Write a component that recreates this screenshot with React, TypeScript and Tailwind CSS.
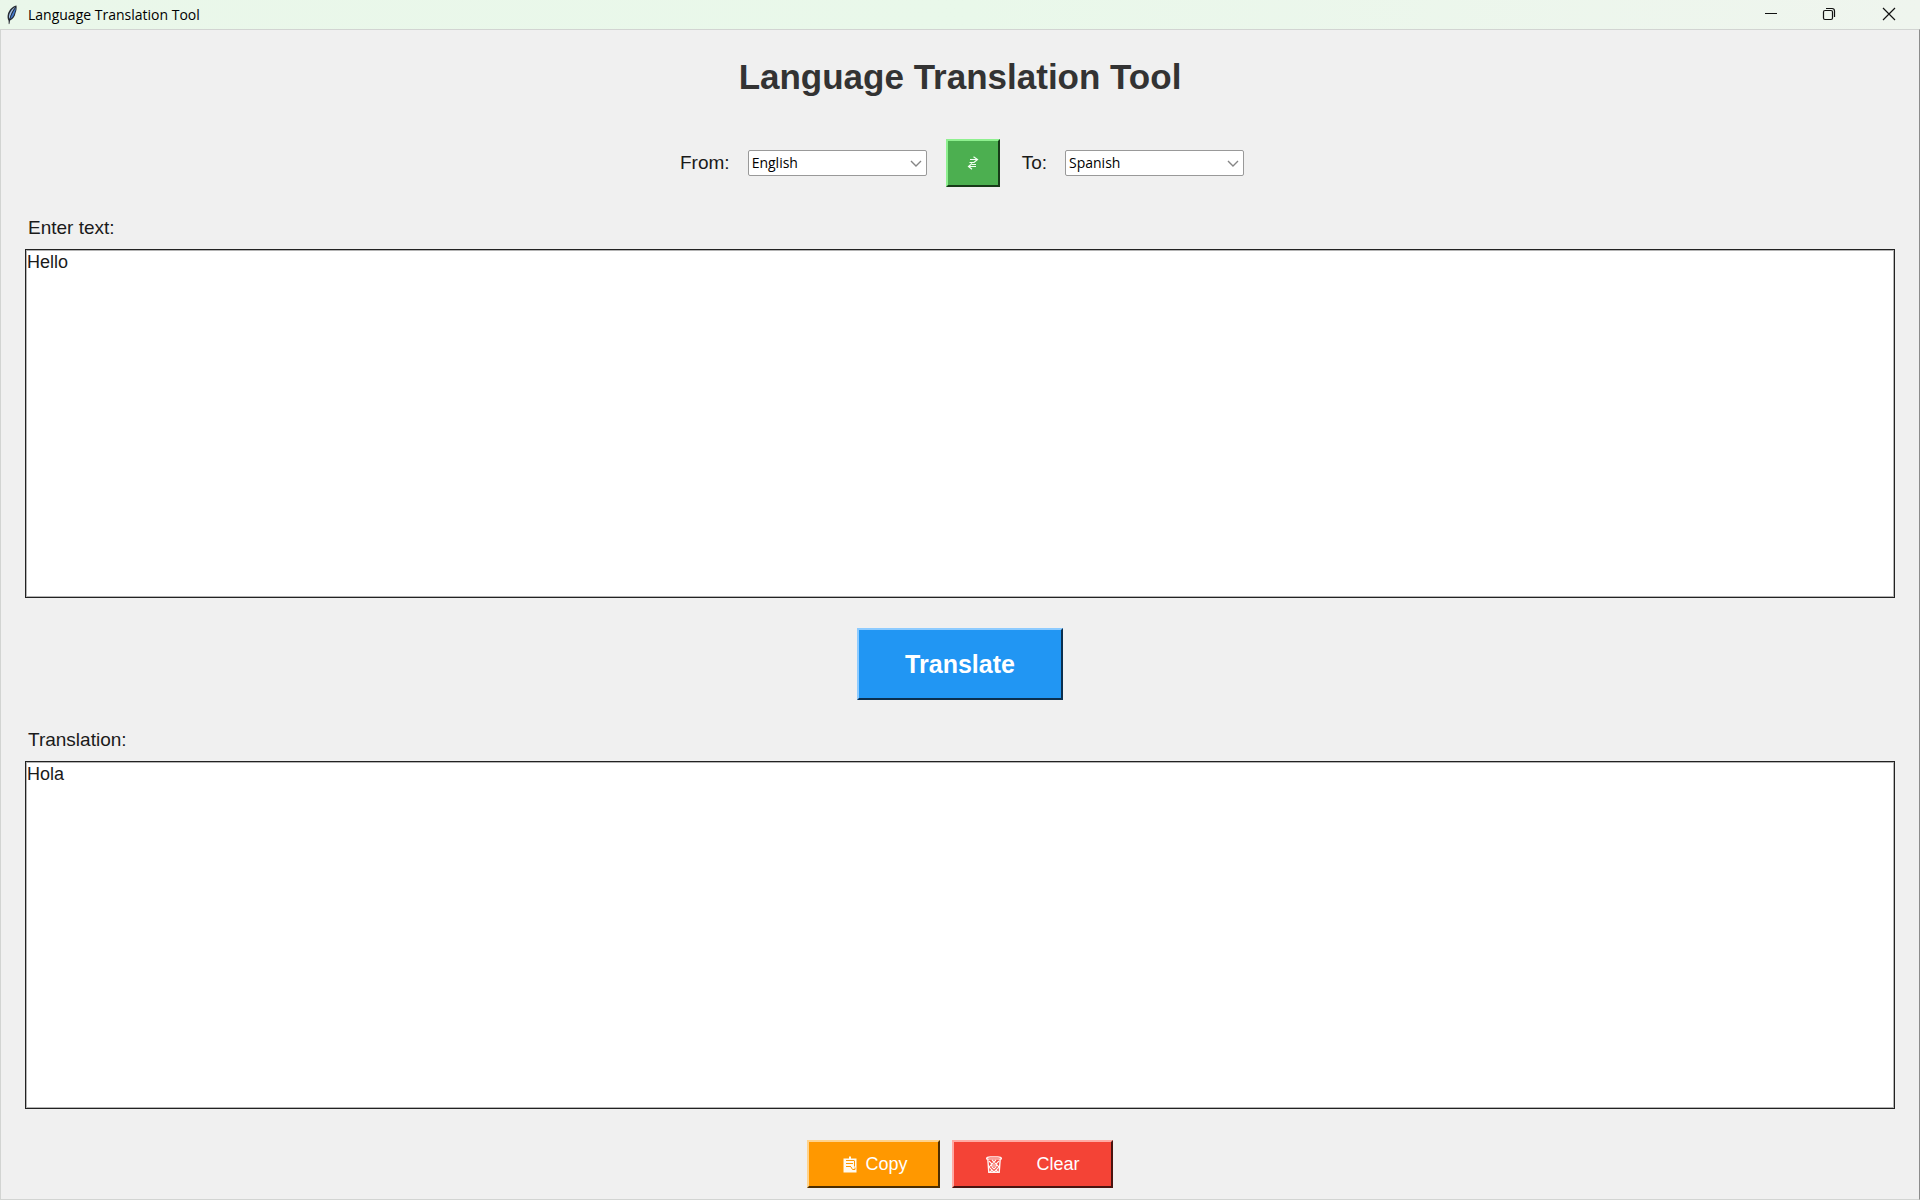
import { useState } from "react";

const LANGUAGES = ["English", "Spanish", "French", "German", "Italian"];

function FeatherIcon() {
  return (
    <svg width="12" height="20" viewBox="0 0 12 20" aria-hidden="true">
      <path d="M10.5.5C7.5 1 3.5 4 2 8.500 1.200 11.500 1.500 14 2.500 15.500L3 19.500l1-4C7 14 9 11.500 9.500 8 10.500 6 10.800 3 10.500.5Z" fill="#252a33" />
      <path d="M9.500 2C7 3 4 6.500 3.200 10c-.4 1.700-.2 3.200.2 4C4.500 10 6.500 5.500 9.500 2Z" fill="#a5c4ec" />
      <path d="M9.800 2.500C7 6.500 5 10.500 4 14.200 6.500 13 8 10.500 8.500 8c.9-1.700 1.300-3.600 1.300-5.500Z" fill="#4379c8" />
      <path d="M9.800 2C6.500 6 4.200 11 3 19" fill="none" stroke="#1a1f28" strokeWidth=".5" />
    </svg>
  );
}

function LanguageSelect({ id, value, onChange }: { id: string; value: string; onChange: (v: string) => void }) {
  return (
    <div className="relative flex w-[179px]">
      <select
        id={id}
        value={value}
        onChange={(e) => onChange(e.target.value)}
        className="h-[26px] w-full appearance-none rounded-[2px] border border-[#999999] bg-white pl-[3px] pr-6 font-['Open_Sans',sans-serif] text-[14px] leading-5 text-black outline-none"
      >
        {LANGUAGES.map((l) => (
          <option key={l}>{l}</option>
        ))}
      </select>
      <svg className="pointer-events-none absolute right-[5px] top-[10px]" width="12" height="8" viewBox="0 0 12 8" fill="none" stroke="#858585" strokeWidth="1.400" aria-hidden="true">
        <path d="M1 1l5 5 5-5" />
      </svg>
    </div>
  );
}

function SwapIcon() {
  return (
    <svg width="12" height="14" viewBox="0 0 12 14" fill="none" stroke="#f2fff2" strokeWidth="1.200" aria-hidden="true">
      <path d="M3 3.500h7.500M6.500.8l4 2.700L7 6.500H2.500M9 10.500H1.500M5 7.500l-3.500 3L5 13.200M5 8.500h4" />
    </svg>
  );
}

function ClipboardIcon() {
  return (
    <svg width="14" height="17" viewBox="0 0 14 17" aria-hidden="true">
      <path d="M.5 2.500H6V.5h2v2h5.500v14H.5Z" fill="#fffaf0" />
      <path d="M3 4.500h8M3 7.500h7M3 10.500h5" stroke="#ff9800" strokeWidth="1.200" />
      <path d="M11.500 4.500v6M8 11l1.500 2.500h2.500v-2" fill="none" stroke="#ff9800" />
    </svg>
  );
}

function TrashIcon() {
  return (
    <svg width="16" height="17" viewBox="0 0 16 17" fill="none" stroke="#fff5f4" aria-hidden="true">
      <path d="M.5 3C.5 1.200 2 .8 4 .8h8c2 0 3.500.4 3.500 2.200Z" strokeWidth="1.200" />
      <path d="M1.800 3l1 13.200h10.400l1-13.200" strokeWidth="1.400" />
      <path d="M3 5l3 3-3 3 3 3-2 2M13 5l-3 3 3 3-3 3 2 2M6 4l2 2 2-2M6 8l2-2 2 2v3l-2 2-2-2ZM6 14l2 2 2-2M8 8v3" strokeWidth="1.100" />
    </svg>
  );
}

export default function App() {
  const [from, setFrom] = useState("English");
  const [to, setTo] = useState("Spanish");
  const [input, setInput] = useState("Hello");
  const [output, setOutput] = useState("Hola");

  const swap = () => {
    setFrom(to);
    setTo(from);
  };

  return (
    <div className="flex min-h-screen flex-col bg-[#f0f0f0] font-['Liberation_Sans',Arial,sans-serif] text-[#1a1a1a]">
      <header className="flex h-[29px] items-center bg-linear-to-r from-[#eaf7ea] via-[#e9f8ea] to-[#eff5ee] text-black">
        <div className="flex flex-1 items-center gap-2.5 pl-1.5">
          <FeatherIcon />
          <span className="font-['Open_Sans',sans-serif] text-[14px] leading-5">Language Translation Tool</span>
        </div>
        <div className="flex pb-px">
          <button aria-label="Minimize" className="flex h-7 w-[58px] items-center justify-center">
            <svg width="14" height="14" viewBox="0 0 14 14" stroke="#111" strokeWidth="1"><path d="M1 6.500h12" /></svg>
          </button>
          <button aria-label="Restore" className="flex h-7 w-[58px] items-center justify-center">
            <svg width="14" height="14" viewBox="0 0 14 14" fill="none" stroke="#111" strokeWidth="1.200">
              <rect x="1.500" y="3.500" width="9" height="9" rx="1.500" />
              <path d="M4 1.500h6a2.500 2.500 0 0 1 2.500 2.500v6" />
            </svg>
          </button>
          <button aria-label="Close" className="flex h-7 w-[62px] items-center justify-center">
            <svg width="14" height="14" viewBox="0 0 14 14" stroke="#111" strokeWidth="1.200"><path d="M1 1l12 12M13 1L1 13" /></svg>
          </button>
        </div>
      </header>

      <main className="flex flex-1 flex-col border border-[#d2d4d2] border-r-[#8c8c8c] px-6 pb-[11px]">
        <h1 className="mt-[27px] text-center text-[35px] leading-10 font-bold text-[#333333]">Language Translation Tool</h1>

        <div className="mt-[42px] flex items-center justify-center pl-1">
          <label htmlFor="from" className="mr-[18px] text-[19px] leading-6">From:</label>
          <LanguageSelect id="from" value={from} onChange={setFrom} />
          <button
            aria-label="Swap languages"
            onClick={swap}
            className="ml-[19px] mr-[22px] flex h-12 w-[54px] items-center justify-center border-2 border-t-[#8ef08f] border-l-[#8ef08f] border-r-[#173a18] border-b-[#173a18] bg-[#4caf50]"
          >
            <SwapIcon />
          </button>
          <label htmlFor="to" className="mr-[18px] text-[19px] leading-6">To:</label>
          <LanguageSelect id="to" value={to} onChange={setTo} />
        </div>

        <label htmlFor="source" className="mt-[29px] ml-[3px] self-start text-[19px] leading-6">Enter text:</label>
        <textarea
          id="source"
          value={input}
          onChange={(e) => setInput(e.target.value)}
          className="mt-[9px] min-h-24 flex-1 resize-none border border-[#222222] bg-white px-px py-px text-[18px] leading-[22px] inset-ring inset-ring-[#b4b4b4] outline-none"
        />

        <button
          onClick={() => setOutput(input === "Hello" ? "Hola" : input)}
          className="mt-[30px] flex h-[72px] w-[206px] items-center justify-center self-center border-2 border-t-[#8dcbff] border-l-[#8dcbff] border-r-[#0b2f4e] border-b-[#0b2f4e] bg-[#2196f3] text-[25px] leading-7 font-bold text-white"
        >
          Translate
        </button>

        <label htmlFor="result" className="mt-7 ml-[3px] self-start text-[19px] leading-6">Translation:</label>
        <textarea
          id="result"
          value={output}
          onChange={(e) => setOutput(e.target.value)}
          className="mt-[9px] min-h-24 flex-1 resize-none border border-[#222222] bg-white px-px py-px text-[18px] leading-[22px] inset-ring inset-ring-[#b4b4b4] outline-none"
        />

        <div className="mt-[31px] flex justify-center gap-3">
          <button
            onClick={() => navigator.clipboard?.writeText(output)}
            className="flex h-12 w-[133px] items-center justify-center gap-2 border-2 border-t-[#ffd38c] border-l-[#ffd38c] border-r-[#4d2e00] border-b-[#4d2e00] bg-[#ff9800] pl-1 text-[18px] leading-6 text-white"
          >
            <ClipboardIcon />
            Copy
          </button>
          <button
            onClick={() => {
              setInput("");
              setOutput("");
            }}
            className="flex h-12 w-[161px] items-center justify-center gap-[34px] border-2 border-t-[#ffaaa4] border-l-[#ffaaa4] border-r-[#4a1410] border-b-[#4a1410] bg-[#f44336] pl-px text-[18px] leading-6 text-white"
          >
            <TrashIcon />
            Clear
          </button>
        </div>
      </main>
    </div>
  );
}
